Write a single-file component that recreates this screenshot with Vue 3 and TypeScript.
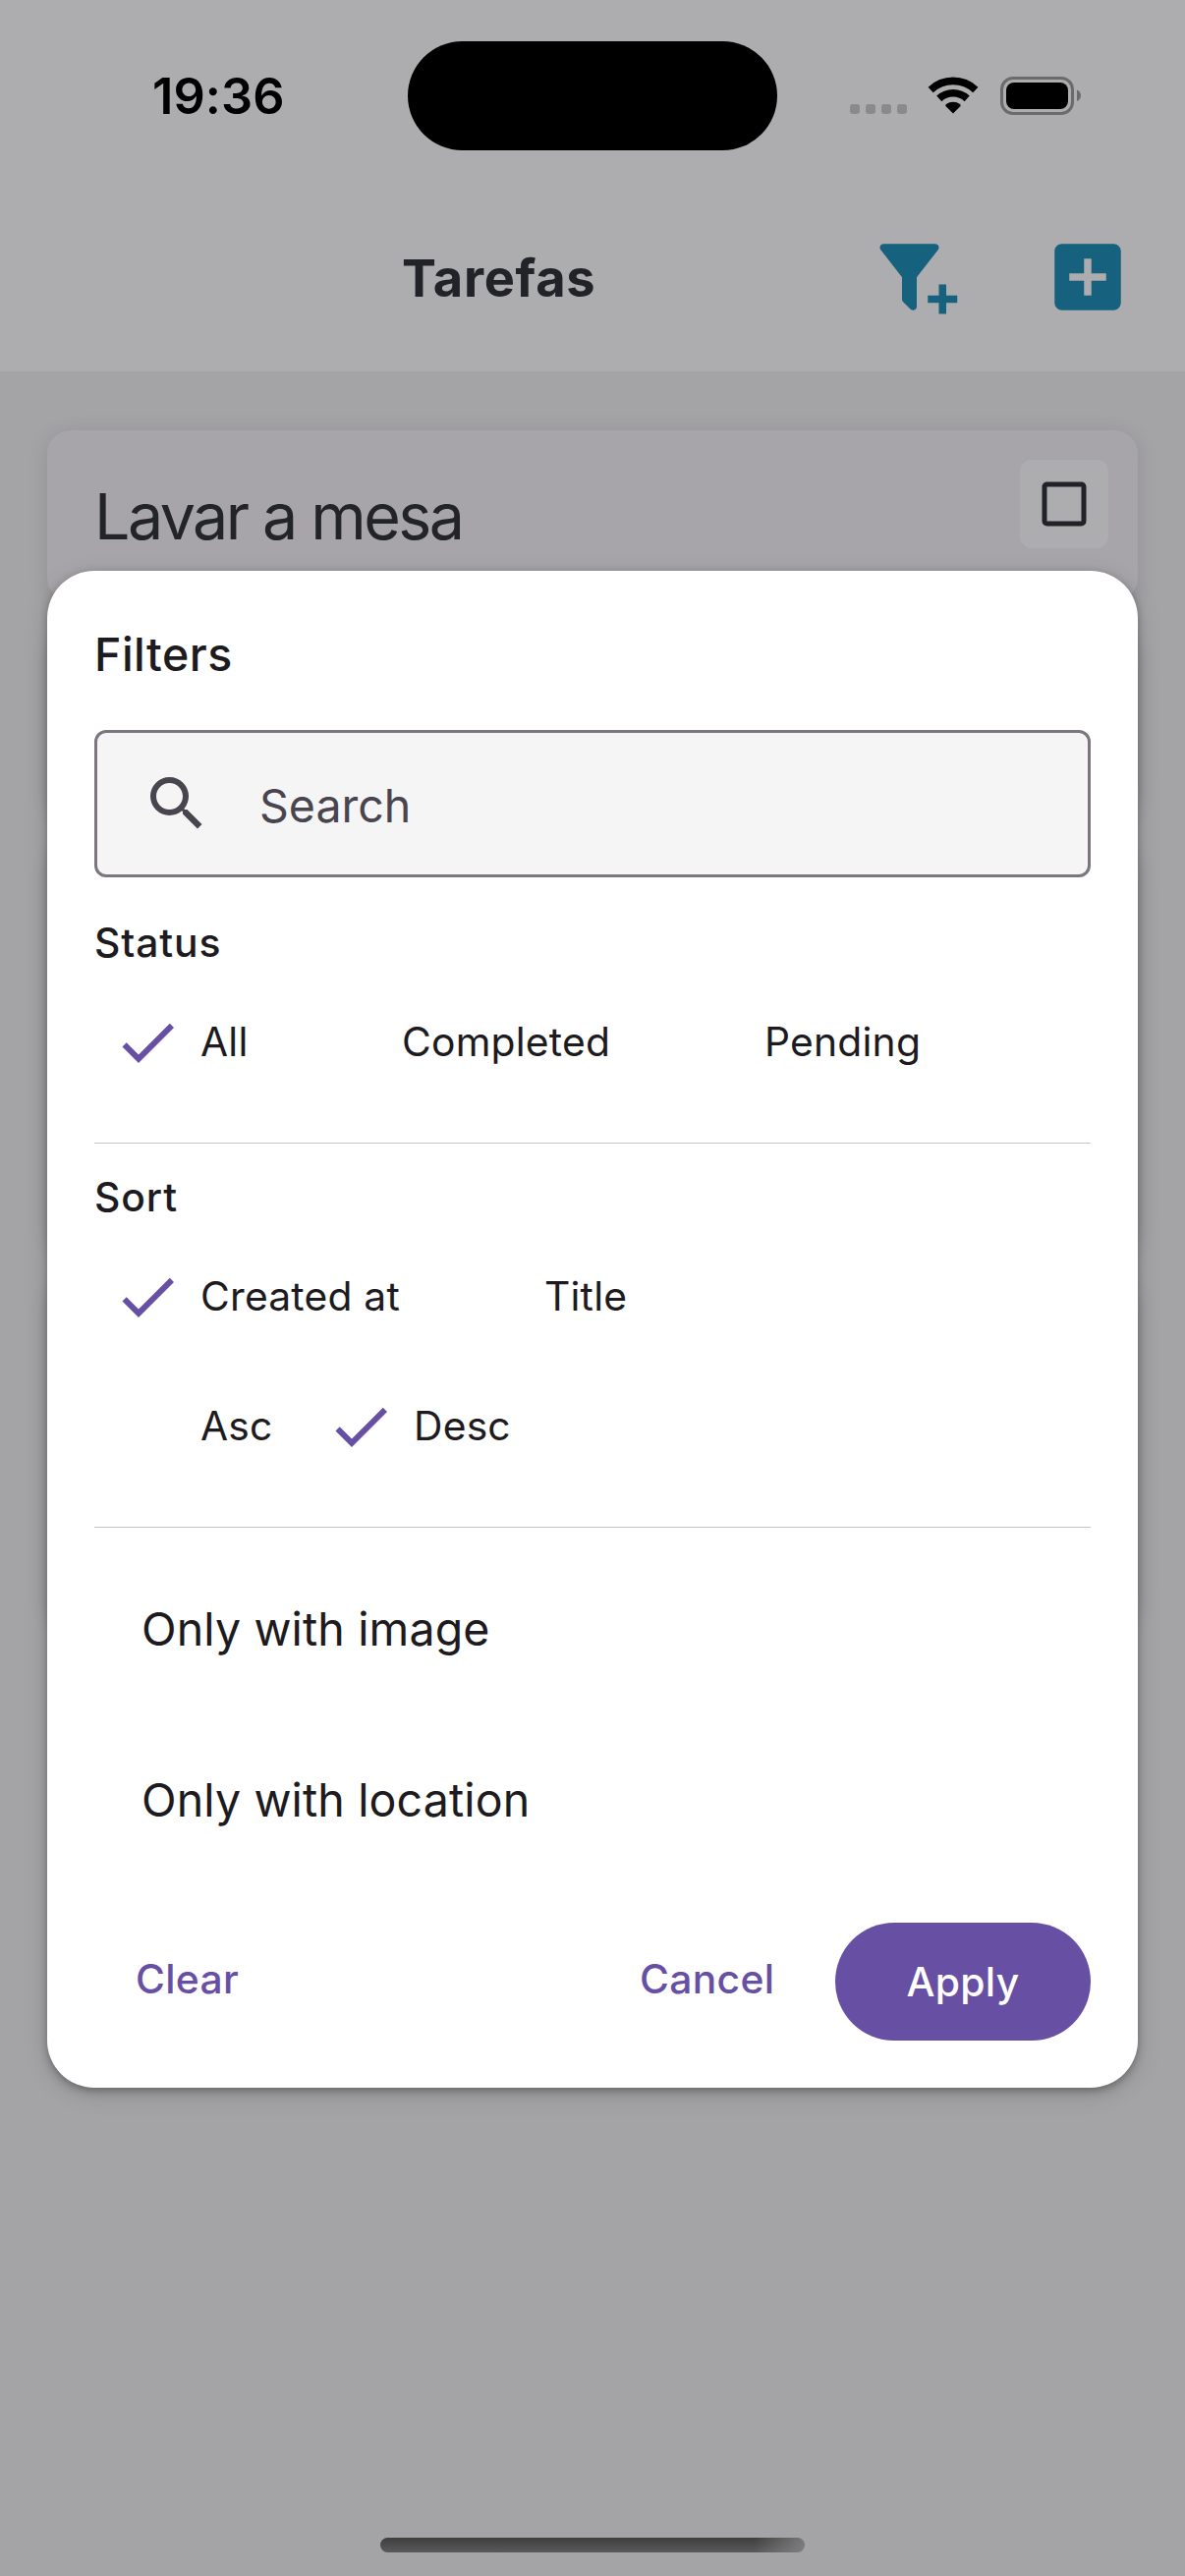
<script setup lang="ts">
interface Option {
  label: string
  selected: boolean
  width?: number
}

const statusOptions: Option[] = [
  { label: 'All', selected: true, width: 205 },
  { label: 'Completed', selected: false, width: 369 },
  { label: 'Pending', selected: false },
]
const sortOptions: Option[] = [
  { label: 'Created at', selected: true, width: 350 },
  { label: 'Title', selected: false },
]
const orderOptions: Option[] = [
  { label: 'Asc', selected: false, width: 217 },
  { label: 'Desc', selected: true },
]
const groups: Option[][] = [sortOptions, orderOptions]
const cardHeights: number[] = [174, 180, 406, 344]
const checkPath = 'M21,7L9,19L3.5,13.5L4.91,12.09L9,16.17L19.59,5.59L21,7Z'
</script>

<template>
  <div class="screen">
    <header class="top">
      <div class="status-bar">
        <span class="clock">19:36</span>
        <div class="island"></div>
        <div class="indicators">
          <div class="dots"><i v-for="n in 4" :key="n"></i></div>
          <svg class="wifi" width="52" height="38" viewBox="-26 -37.5 52 38">
            <g fill="none" stroke="#000" stroke-width="7.6">
              <path d="M-22.8,-24.1A33.2,33.2 0 0 1 22.8,-24.1" />
              <path d="M-14.2,-15.1A20.8,20.8 0 0 1 14.2,-15.1" />
            </g>
            <path d="M0,0L-7.6,-7.6Q-8,-8.6 -7,-9.4A12,12 0 0 1 7,-9.4Q8,-8.6 7.6,-7.6Z" />
          </svg>
          <svg class="battery" width="83" height="39" viewBox="0 0 83 39">
            <rect x="1.5" y="1.5" width="72" height="36" rx="11.5" fill="none" stroke="#6b6b6d" stroke-width="3" />
            <rect x="6" y="6" width="63" height="27" rx="8" />
            <path d="M78,13.5C80.6,14.4 82,16.8 82,19.2C82,21.6 80.6,24 78,24.9Z" fill="#6b6b6d" />
          </svg>
        </div>
      </div>
      <div class="nav">
        <h1>Tarefas</h1>
        <div class="nav-icons">
          <svg width="90" height="90" viewBox="0 0 24 24" fill="#15617e">
            <path
              d="M12 12V19.88C12.04 20.18 11.94 20.5 11.71 20.71C11.32 21.1 10.69 21.1 10.3 20.71L8.29 18.7C8.06 18.47 7.96 18.16 8 17.87V12H7.97L2.21 4.62C1.87 4.19 1.95 3.56 2.38 3.22C2.57 3.08 2.78 3 3 3H17C17.22 3 17.43 3.08 17.62 3.22C18.05 3.56 18.13 4.19 17.79 4.62L12.03 12H12M15 17H18V14H20V17H23V19H20V22H18V19H15V17Z"
            />
          </svg>
          <svg width="90" height="90" viewBox="0 0 24 24" fill="#15617e">
            <path
              d="M17,13H13V17H11V13H7V11H11V7H13V11H17M19,3H5C3.89,3 3,3.89 3,5V19A2,2 0 0,0 5,21H19A2,2 0 0,0 21,19V5C21,3.89 20.1,3 19,3Z"
            />
          </svg>
        </div>
      </div>
    </header>

    <main class="tasks">
      <article v-for="(h, i) in cardHeights" :key="i" class="card" :style="{ height: h + 'px' }">
        <template v-if="i === 0">
          <h2>Lavar a mesa</h2>
          <div class="toggle">
            <svg width="60" height="60" viewBox="0 0 24 24" fill="#222328">
              <path
                d="M19,3H5C3.89,3 3,3.89 3,5V19A2,2 0 0,0 5,21H19A2,2 0 0,0 21,19V5C21,3.89 20.1,3 19,3M19,5V19H5V5H19Z"
              />
            </svg>
          </div>
        </template>
      </article>
    </main>

    <section class="modal">
      <h3 class="title">Filters</h3>
      <div class="search">
        <svg width="72" height="72" viewBox="0 0 24 24" fill="#49454f">
          <path
            d="M9.5,3A6.5,6.5 0 0,1 16,9.5C16,11.11 15.41,12.59 14.44,13.73L14.71,14H15.5L20.5,19L19,20.5L14,15.5V14.71L13.73,14.44C12.59,15.41 11.11,16 9.5,16A6.5,6.5 0 0,1 3,9.5A6.5,6.5 0 0,1 9.5,3M9.5,5C7,5 5,7 5,9.5C5,12 7,14 9.5,14C12,14 14,12 14,9.5C14,7 12,5 9.5,5Z"
          />
        </svg>
        <span>Search</span>
      </div>

      <h4 class="label first">Status</h4>
      <div class="row">
        <div v-for="o in statusOptions" :key="o.label" class="option" :style="o.width ? { width: o.width + 'px' } : {}">
          <svg width="72" height="72" viewBox="0 0 24 24" fill="#6750a4">
            <path v-if="o.selected" :d="checkPath" />
          </svg>
          <span>{{ o.label }}</span>
        </div>
      </div>
      <hr />

      <h4 class="label">Sort</h4>
      <div v-for="(g, i) in groups" :key="i" class="row">
        <div v-for="o in g" :key="o.label" class="option" :style="o.width ? { width: o.width + 'px' } : {}">
          <svg width="72" height="72" viewBox="0 0 24 24" fill="#6750a4">
            <path v-if="o.selected" :d="checkPath" />
          </svg>
          <span>{{ o.label }}</span>
        </div>
      </div>
      <hr />

      <div class="switches">
        <div>Only with image</div>
        <div>Only with location</div>
      </div>

      <footer class="actions">
        <button class="clear">Clear</button>
        <button class="cancel">Cancel</button>
        <button class="apply">Apply</button>
      </footer>
    </section>

    <div class="home"></div>
  </div>
</template>

<style>
html,
body {
  margin: 0;
  background: #a4a4a6;
}
</style>

<style scoped>
.screen {
  position: relative;
  width: 1206px;
  height: 2622px;
  overflow: hidden;
  background: #a4a4a6;
  font-family: Inter, 'Liberation Sans', sans-serif;
  color: #1d1b20;
}
h1, h2, h3, h4, hr, button {
  margin: 0;
  padding: 0;
  border: 0;
}
svg {
  display: block;
  flex: none;
}
.top {
  height: 378px;
  background: #adadaf;
}
.status-bar {
  display: flex;
  align-items: flex-start;
  height: 236px;
}
.clock {
  width: 260px;
  margin-left: 155px;
  margin-top: 63px;
  line-height: 70px;
  font-size: 50.5px;
  font-weight: 600;
  letter-spacing: 0.1px;
  color: #000;
}
.island {
  width: 376px;
  height: 111px;
  margin-top: 41.5px;
  border-radius: 55.5px;
  background: #000;
}
.indicators {
  display: flex;
  margin: 78px 0 0 74px;
}
.dots {
  display: flex;
  gap: 6px;
  margin: 28px 21px 0 0;
}
.dots i {
  width: 10px;
  height: 10px;
  border-radius: 3px;
  background: #8a8a8c;
}
.battery {
  margin-left: 22px;
}
.nav {
  display: flex;
  align-items: flex-start;
}
.nav h1 {
  width: 479px;
  margin-left: 409px;
  margin-top: 12px;
  line-height: 70px;
  font-size: 52.4px;
  font-weight: 700;
  letter-spacing: 0.7px;
  color: #222328;
}
.nav-icons {
  display: flex;
  gap: 84px;
}
.nav-icons svg {
  margin-top: 1px;
}
.tasks {
  display: flex;
  flex-direction: column;
  gap: 36px;
  padding: 60px 48px 0;
}
.card {
  box-sizing: border-box;
  display: flex;
  justify-content: space-between;
  padding: 30px 30px 0 48px;
  border-radius: 24px;
  background: #a7a5aa;
  box-shadow: 0 3px 21px rgba(0, 0, 0, 0.11);
}
.card h2 {
  margin-top: 18px;
  line-height: 80px;
  font-size: 64.5px;
  font-weight: 400;
  letter-spacing: -2.55px;
  color: #222428;
}
.toggle {
  display: flex;
  align-items: center;
  justify-content: center;
  width: 90px;
  height: 90px;
  border-radius: 12px;
  background: #adadaf;
}
.modal {
  position: absolute;
  top: 581px;
  left: 48px;
  right: 48px;
  height: 1544px;
  box-sizing: border-box;
  padding: 48px;
  border-radius: 48px;
  background: #fff;
  box-shadow: 0 3px 9px rgba(0, 0, 0, 0.3), 0 6px 24px rgba(0, 0, 0, 0.15);
}
.title {
  line-height: 74px;
  font-size: 46.5px;
  font-weight: 500;
  letter-spacing: 0.5px;
}
.search {
  box-sizing: border-box;
  display: flex;
  align-items: flex-start;
  height: 150px;
  margin-top: 40px;
  padding: 36px 0 0 45px;
  border: 3px solid #7b757f;
  border-radius: 12px;
  background: #f5f5f5;
}
.search span {
  margin-left: 48px;
  line-height: 76px;
  font-size: 46.5px;
  color: #49454f;
}
.label {
  margin-top: 24px;
  line-height: 60px;
  font-size: 40.8px;
  font-weight: 500;
  letter-spacing: 0.9px;
}
.label.first {
  margin-top: 36px;
}
.row {
  display: flex;
  margin-top: 36px;
}
.row + .row {
  margin-top: 60px;
}
.option {
  display: flex;
  box-sizing: border-box;
  padding-left: 18px;
}
.option span {
  margin-left: 18px;
  line-height: 70px;
  font-size: 40.8px;
  letter-spacing: 0.2px;
  white-space: nowrap;
}
hr {
  height: 1px;
  margin-top: 66px;
  background: #c6c3cc;
}
.switches {
  display: flex;
  flex-direction: column;
  gap: 102px;
  padding: 67px 48px 0;
  line-height: 72px;
  font-size: 46.5px;
  letter-spacing: 0.13px;
}
.actions {
  display: flex;
  align-items: flex-start;
  margin-top: 89px;
}
button {
  font: 500 40.8px/114px Inter, 'Liberation Sans', sans-serif;
  letter-spacing: 0.3px;
  color: #6750a4;
  background: none;
  text-align: left;
}
.clear {
  margin-left: 42px;
}
.cancel {
  width: 199px;
  margin-left: auto;
}
.apply {
  width: 260px;
  height: 120px;
  border-radius: 60px;
  line-height: 120px;
  text-align: center;
  color: #fff;
  background: #6750a4;
}
.home {
  position: absolute;
  left: 387px;
  top: 2583px;
  width: 432px;
  height: 15px;
  border-radius: 7.5px;
  background: linear-gradient(90deg, transparent 88%, rgba(140, 140, 142, 0.75)), linear-gradient(#3d3e3d, #5a5a5a);
}
</style>
